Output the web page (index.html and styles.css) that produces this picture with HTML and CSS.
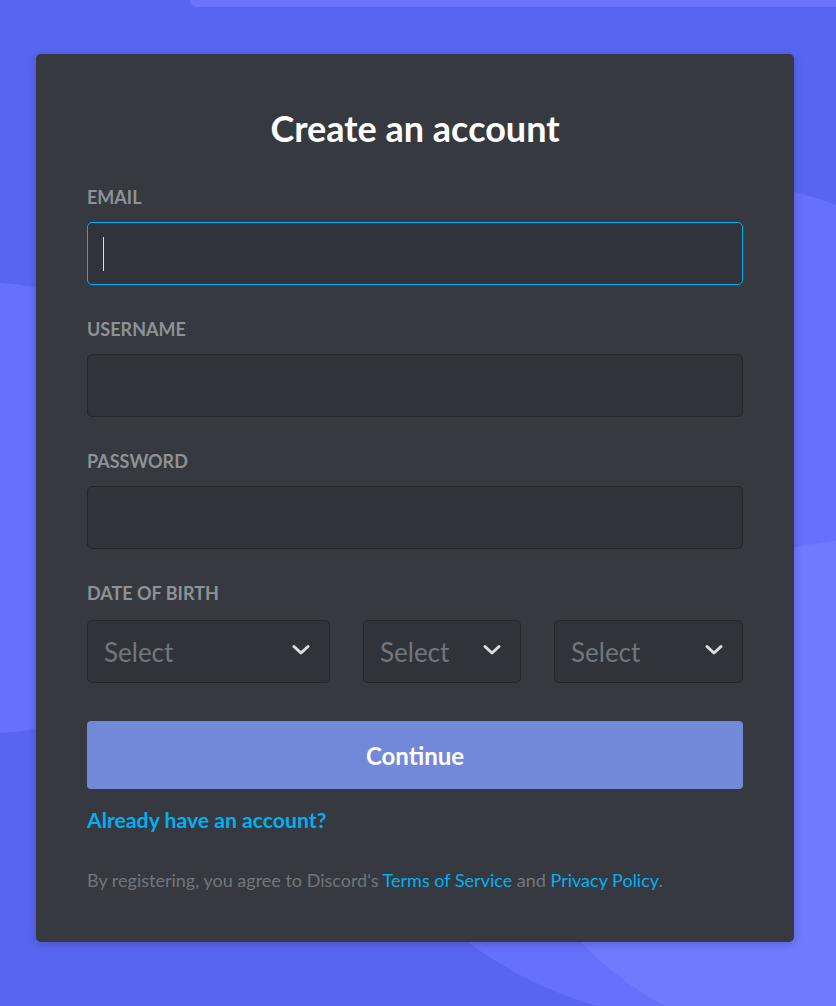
FILE: index.html
```html
<!DOCTYPE html>
<html lang="en">
<head>
<meta charset="utf-8">
<title>Create an account</title>
<link rel="stylesheet" href="styles.css">
</head>
<body>
<div class="backdrop" aria-hidden="true">
  <div class="shape shape-topbar"></div>
  <div class="shape shape-left"></div>
  <div class="shape shape-right"></div>
  <div class="shape shape-corner"></div>
</div>
<main class="page">
  <form class="card">
    <h1 class="title">Create an account</h1>

    <div class="field">
      <label class="label">EMAIL</label>
      <div class="input input-focused"><span class="caret"></span></div>
    </div>

    <div class="field">
      <label class="label">USERNAME</label>
      <div class="input"></div>
    </div>

    <div class="field">
      <label class="label">PASSWORD</label>
      <div class="input"></div>
    </div>

    <div class="field">
      <label class="label">DATE OF BIRTH</label>
      <div class="dob">
        <div class="select"><span>Select</span><svg class="chev" viewBox="0 0 18 12" width="18" height="12"><path d="M2 2.5 L9 9 L16 2.5" fill="none" stroke="currentColor" stroke-width="3" stroke-linecap="round" stroke-linejoin="round"/></svg></div>
        <div class="select"><span>Select</span><svg class="chev" viewBox="0 0 18 12" width="18" height="12"><path d="M2 2.5 L9 9 L16 2.5" fill="none" stroke="currentColor" stroke-width="3" stroke-linecap="round" stroke-linejoin="round"/></svg></div>
        <div class="select"><span>Select</span><svg class="chev" viewBox="0 0 18 12" width="18" height="12"><path d="M2 2.5 L9 9 L16 2.5" fill="none" stroke="currentColor" stroke-width="3" stroke-linecap="round" stroke-linejoin="round"/></svg></div>
      </div>
    </div>

    <button type="button" class="btn">Continue</button>

    <a class="login-link" href="#">Already have an account?</a>

    <p class="legal">By registering, you agree to Discord's <a href="#">Terms of Service</a> and <a href="#">Privacy Policy</a>.</p>
  </form>
</main>
</body>
</html>
```

FILE: styles.css
```css
* { box-sizing: border-box; }

html, body {
  margin: 0;
  padding: 0;
  width: 836px;
  height: 1006px;
  overflow: hidden;
}

body {
  background: #5865f0;
  font-family: "Lato", "Noto Sans", sans-serif;
  position: relative;
}

.backdrop {
  position: absolute;
  inset: 0;
  overflow: hidden;
  z-index: 0;
}

.shape {
  position: absolute;
}

.shape-topbar {
  left: 190px;
  top: -10px;
  width: 700px;
  height: 17px;
  border-radius: 7px;
  background: #6a75fb;
}

.shape-left {
  left: -270px;
  top: 282px;
  width: 500px;
  height: 452px;
  border-radius: 50%;
  background: #6570fb;
}

.shape-right {
  left: 300px;
  top: 180px;
  width: 800px;
  height: 840px;
  border-radius: 50%;
  background: #6570fb;
}

.shape-corner {
  left: 521px;
  top: 537px;
  width: 758px;
  height: 526px;
  border-radius: 50%;
  background: #6f7afe;
}

.page {
  position: relative;
  z-index: 1;
  padding: 54px 0 0 36px;
}

.card {
  width: 758px;
  height: 888px;
  background: #36393f;
  border-radius: 5px;
  box-shadow: 0 2px 10px 0 rgba(0, 0, 0, 0.2);
  padding: 52px 51px 0;
  display: flex;
  flex-direction: column;
}

.title {
  margin: 0 0 3px;
  font-size: 36px;
  line-height: 44px;
  font-weight: 700;
  color: #ffffff;
  text-align: center;
}

.field {
  display: flex;
  flex-direction: column;
  margin-top: 32px;
}

.label {
  font-size: 18px;
  line-height: 24px;
  font-weight: 700;
  color: #8e9297;
  margin-bottom: 13px;
}

.input {
  height: 63px;
  background: #303339;
  border: 1px solid #25272c;
  border-radius: 5px;
  display: flex;
  align-items: center;
  padding-left: 15px;
}

.input-focused {
  border-color: #00b0f4;
}

.caret {
  width: 1px;
  height: 34px;
  background: #dcddde;
}

.dob {
  display: grid;
  grid-template-columns: 243px 158px 189px;
  justify-content: space-between;
  margin-top: 2px;
}

.select {
  height: 63px;
  background: #303339;
  border: 1px solid #25272c;
  border-radius: 5px;
  display: flex;
  align-items: center;
  justify-content: space-between;
  padding: 0 19px 0 16px;
  font-size: 26px;
  color: #72767d;
}

.chev {
  color: #dcddde;
  margin-top: -3px;
}

.btn {
  margin-top: 38px;
  height: 68px;
  border: 0;
  border-radius: 4px;
  background: #7289da;
  color: #ffffff;
  font-family: inherit;
  font-size: 24px;
  font-weight: 700;
  cursor: pointer;
}

.login-link {
  margin-top: 18px;
  align-self: flex-start;
  font-size: 21.2px;
  line-height: 26px;
  font-weight: 700;
  color: #00b0f4;
  text-decoration: none;
}

.legal {
  margin: 36px 0 0;
  font-size: 18px;
  line-height: 22px;
  color: #72767d;
}

.legal a {
  color: #00b0f4;
  text-decoration: none;
}
```
